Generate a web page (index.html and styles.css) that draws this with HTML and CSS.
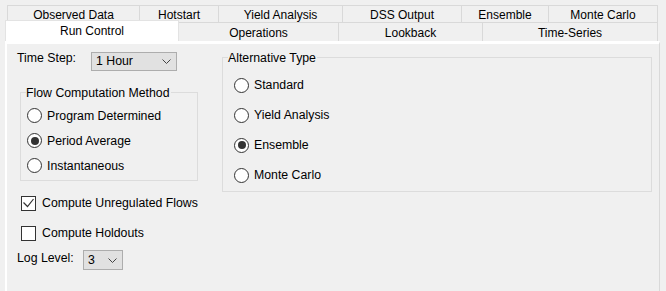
FILE: index.html
```html
<!DOCTYPE html><html>
<head>
  <title>Run Control</title>
  <meta charset="UTF-8">
  <link rel="stylesheet" href="styles.css">
</head>
<body>
<div class="tabstrip">
  <div class="tabrow back">
    <div class="tab" style="width:133px">Observed Data</div>
    <div class="tab" style="width:79px">Hotstart</div>
    <div class="tab" style="width:124px">Yield Analysis</div>
    <div class="tab" style="width:119px">DSS Output</div>
    <div class="tab" style="width:87px">Ensemble</div>
    <div class="tab" style="width:109px">Monte Carlo</div>
  </div>
  <div class="tabrow front">
    <div class="tab selected" style="width:174px">Run Control</div>
    <div class="tab" style="width:160px">Operations</div>
    <div class="tab" style="width:144px">Lookback</div>
    <div class="tab" style="width:175px">Time-Series</div>
  </div>
</div>

<div class="panel">
  <div class="left">
    <div class="field">
      <span class="label" style="width:74px">Time Step:</span>
      <div class="combo" style="width:86px">
        <span>1 Hour</span>
        <svg width="9" height="5" viewBox="0 0 9 5"><polyline points="0.5,0.5 4.5,4.5 8.5,0.5" fill="none" stroke="#444" stroke-width="1"/></svg>
      </div>
    </div>

    <div class="group flow">
      <div class="group-title">Flow Computation Method</div>
      <div class="options">
        <div class="opt"><span class="radio"></span>Program Determined</div>
        <div class="opt"><span class="radio checked"></span>Period Average</div>
        <div class="opt"><span class="radio"></span>Instantaneous</div>
      </div>
    </div>

    <div class="checks">
      <div class="check-row">
        <span class="checkbox">
          <svg width="13" height="13" viewBox="0 0 13 13"><polyline points="1.5,5.5 5.5,9.5 11.5,2" fill="none" stroke="#333" stroke-width="1.2"/></svg>
        </span>Compute Unregulated Flows
      </div>
      <div class="check-row"><span class="checkbox"></span>Compute Holdouts</div>
    </div>

    <div class="field log">
      <span class="label" style="width:66px">Log Level:</span>
      <div class="combo tall" style="width:40px">
        <span>3</span>
        <svg width="9" height="5" viewBox="0 0 9 5"><polyline points="0.5,0.5 4.5,4.5 8.5,0.5" fill="none" stroke="#444" stroke-width="1"/></svg>
      </div>
    </div>
  </div>

  <div class="group alt">
    <div class="group-title">Alternative Type</div>
    <div class="options">
      <div class="opt"><span class="radio"></span>Standard</div>
      <div class="opt"><span class="radio"></span>Yield Analysis</div>
      <div class="opt"><span class="radio checked"></span>Ensemble</div>
      <div class="opt"><span class="radio"></span>Monte Carlo</div>
    </div>
  </div>
</div>
</body>
</html>
```

FILE: styles.css
```css
* {
  box-sizing: border-box;
}
body {
  margin: 0;
  background: #f0f0f0;
  font-family: "Liberation Sans", Arial, sans-serif;
  font-size: 12px;
  color: #000;
  height: 291px;
  overflow: hidden;
}
.tabstrip {
  margin-left: 7px;
  padding-top: 5px;
  width: 651px;
}
.tabrow {
  display: flex;
  align-items: flex-start;
}
.tab {
  border-top: 1px solid #d9d9d9;
  border-right: 1px solid #d9d9d9;
  text-align: center;
  white-space: nowrap;
}
.tab:first-child {
  border-left: 1px solid #d9d9d9;
}
.back {
  height: 17px;
}
.back .tab {
  height: 17px;
  padding-top: 2px;
  line-height: 15px;
}
.front {
  height: 19px;
}
.front .tab {
  height: 19px;
  padding-top: 2px;
  line-height: 16px;
}
.front .tab.selected {
  margin-left: -2px;
  margin-top: -2px;
  height: 21px;
  background: #fff;
  border-left: 1px solid #e3e3e3;
  border-top-color: #e3e3e3;
  border-right-color: #e3e3e3;
  padding-top: 3px;
  line-height: 15px;
  position: relative;
  z-index: 1;
}
.panel {
  margin-left: 5px;
  width: 655px;
  height: 250px;
  border-top: 3px solid #fff;
  border-left: 2px solid #fff;
  border-right: 1px solid #d9d9d9;
  padding-left: 10px;
  display: flex;
  align-items: flex-start;
  font-size: 12.3px;
}
.left {
  width: 205px;
  padding-top: 8px;
}
.field {
  display: flex;
  align-items: flex-start;
}
.label {
  line-height: 12px;
}
.combo {
  height: 19px;
  border: 1px solid #adadad;
  background: #e1e1e1;
  display: flex;
  align-items: center;
  justify-content: space-between;
  padding: 0 5px 0 4px;
  line-height: 17px;
}
.combo.tall {
  height: 20px;
  line-height: 18px;
}
.combo svg {
  display: block;
}
.group {
  border: 1px solid #dcdcdc;
}
.group-title {
  width: fit-content;
  margin: -7px 0 0 5px;
  padding: 0 1px 0 0;
  background: #f0f0f0;
  line-height: 14px;
}
.opt {
  display: flex;
  align-items: center;
}
.radio {
  width: 15px;
  height: 15px;
  border: 1px solid #333;
  border-radius: 50%;
  background: #fff;
  margin-right: 5px;
  display: flex;
  align-items: center;
  justify-content: center;
  flex: none;
}
.radio.checked::after {
  content: "";
  width: 8px;
  height: 8px;
  border-radius: 50%;
  background: #333;
}
.flow {
  margin: 21px 0 0 3px;
  width: 178px;
}
.flow .options {
  padding: 3px 0 2px 6px;
}
.flow .opt {
  height: 25px;
}
.checks {
  margin-top: 7px;
  padding-left: 4px;
}
.check-row {
  height: 30px;
  display: flex;
  align-items: center;
}
.checkbox {
  width: 15px;
  height: 15px;
  border: 1px solid #333;
  background: #fff;
  margin-right: 6px;
  flex: none;
}
.checkbox svg {
  display: block;
}
.log {
  margin-top: 2px;
}
.log .label {
  margin-top: 2px;
}
.alt {
  margin-top: 13px;
  width: 430px;
}
.alt .options {
  padding: 5px 0 1px 11px;
}
.alt .opt {
  height: 30px;
}
```
